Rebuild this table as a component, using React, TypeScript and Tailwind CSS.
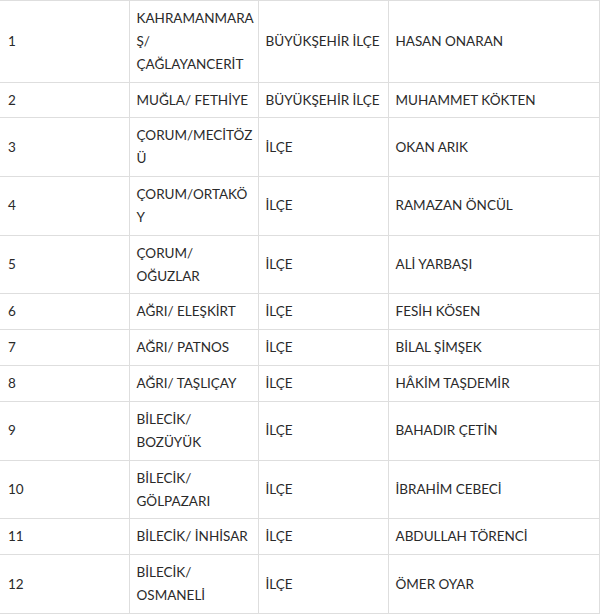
const rows: [string, string, string, string][] = [
  ["1", "KAHRAMANMARAŞ/ ÇAĞLAYANCERİT", "BÜYÜKŞEHİR İLÇE", "HASAN ONARAN"],
  ["2", "MUĞLA/ FETHİYE", "BÜYÜKŞEHİR İLÇE", "MUHAMMET KÖKTEN"],
  ["3", "ÇORUM/MECİTÖZÜ", "İLÇE", "OKAN ARIK"],
  ["4", "ÇORUM/ORTAKÖY", "İLÇE", "RAMAZAN ÖNCÜL"],
  ["5", "ÇORUM/ OĞUZLAR", "İLÇE", "ALİ YARBAŞI"],
  ["6", "AĞRI/ ELEŞKİRT", "İLÇE", "FESİH KÖSEN"],
  ["7", "AĞRI/ PATNOS", "İLÇE", "BİLAL ŞİMŞEK"],
  ["8", "AĞRI/ TAŞLIÇAY", "İLÇE", "HÂKİM TAŞDEMİR"],
  ["9", "BİLECİK/ BOZÜYÜK", "İLÇE", "BAHADIR ÇETİN"],
  ["10", "BİLECİK/ GÖLPAZARI", "İLÇE", "İBRAHİM CEBECİ"],
  ["11", "BİLECİK/ İNHİSAR", "İLÇE", "ABDULLAH TÖRENCİ"],
  ["12", "BİLECİK/ OSMANELİ", "İLÇE", "ÖMER OYAR"],
];

export default function App() {
  return (
    <div className="h-[614px] w-[600px] overflow-hidden bg-white">
      <table
        className="w-[600px] table-fixed border-collapse text-[13.5px] leading-[22.85px] text-[#2a2a2a]"
        style={{ fontFamily: "Lato, 'Noto Sans', sans-serif" }}
      >
        <colgroup>
          <col className="w-[129px]" />
          <col className="w-[129px]" />
          <col className="w-[130px]" />
          <col />
        </colgroup>
        <tbody>
          {rows.map((r) => (
            <tr key={r[0]} className="border-y border-[#dedede]">
              {r.map((cell, i) => (
                <td
                  key={i}
                  className="break-words border-r border-[#dedede] py-[6px] pl-[7px] pr-[3px] align-middle first:pl-[8px]"
                >
                  {cell}
                </td>
              ))}
            </tr>
          ))}
        </tbody>
      </table>
    </div>
  );
}
